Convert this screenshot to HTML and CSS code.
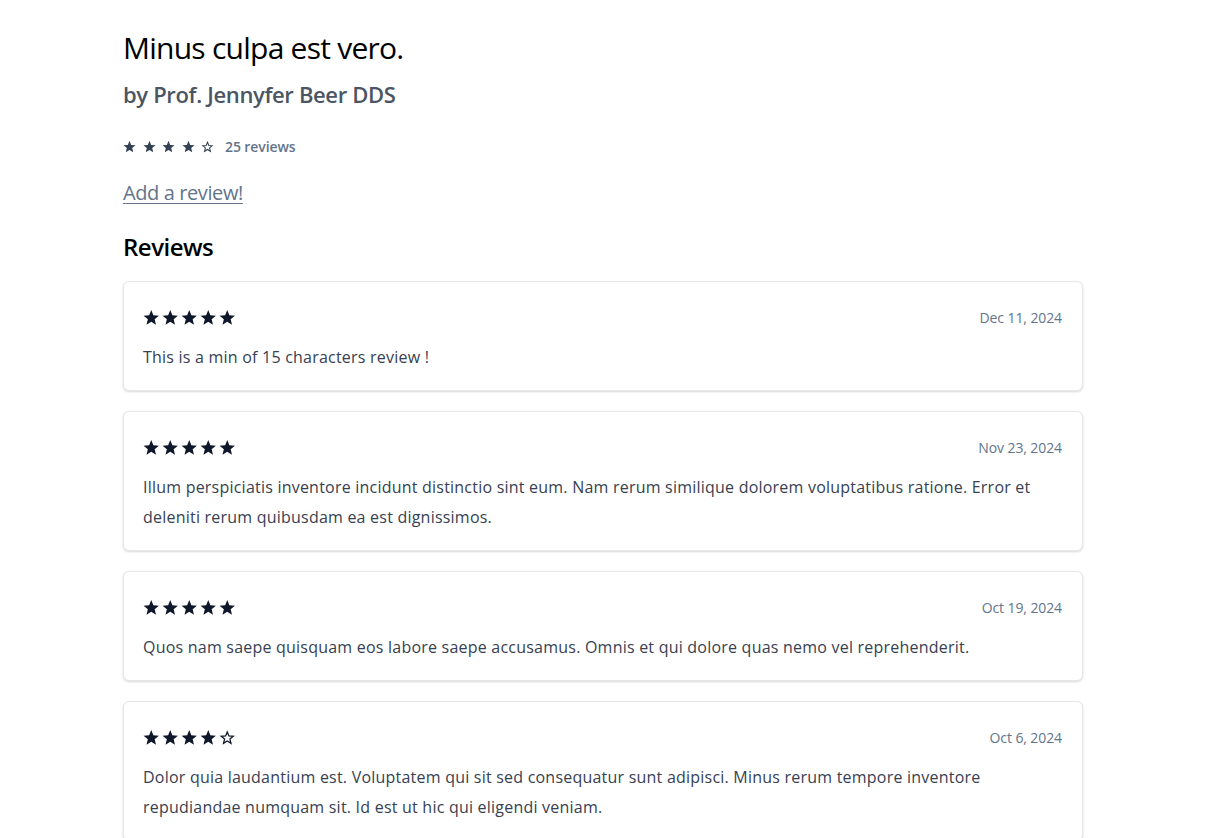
FILE: index.html
```html
<!DOCTYPE html>
<html lang="en">
<head>
<meta charset="utf-8">
<title>Minus culpa est vero.</title>
<link rel="stylesheet" href="styles.css">
</head>
<body>
<svg width="0" height="0" class="defs">
  <defs>
    <symbol id="star-full" viewBox="0 0 24 24"><path d="M12 1.6l3.06 7.5 8.09.6-6.2 5.22 1.94 7.88L12 18.5l-6.89 4.3 1.94-7.88L.85 9.7l8.09-.6z" fill="currentColor"/></symbol>
    <symbol id="star-empty" viewBox="0 0 24 24"><path d="M12 4.2l2.4 5.9 6.35.47-4.87 4.1 1.53 6.2L12 17.5l-5.41 3.37 1.53-6.2-4.87-4.1 6.35-.47z" fill="none" stroke="currentColor" stroke-width="1.9" stroke-linejoin="miter"/></symbol>
  </defs>
</svg>
<main class="page">
  <h1 class="title">Minus culpa est vero.</h1>
  <h2 class="author">by Prof. Jennyfer Beer DDS</h2>
  <div class="summary">
    <span class="stars stars-sm">
      <svg><use href="#star-full"/></svg><svg><use href="#star-full"/></svg><svg><use href="#star-full"/></svg><svg><use href="#star-full"/></svg><svg><use href="#star-empty"/></svg>
    </span>
    <span class="count">25 reviews</span>
  </div>
  <a class="add-link" href="#">Add a review!</a>
  <h3 class="reviews-heading">Reviews</h3>
  <section class="review-list">
    <article class="card">
      <div class="card-top">
        <span class="stars stars-md"><svg><use href="#star-full"/></svg><svg><use href="#star-full"/></svg><svg><use href="#star-full"/></svg><svg><use href="#star-full"/></svg><svg><use href="#star-full"/></svg></span>
        <span class="date">Dec 11, 2024</span>
      </div>
      <p class="body">This is a min of 15 characters review !</p>
    </article>
    <article class="card">
      <div class="card-top">
        <span class="stars stars-md"><svg><use href="#star-full"/></svg><svg><use href="#star-full"/></svg><svg><use href="#star-full"/></svg><svg><use href="#star-full"/></svg><svg><use href="#star-full"/></svg></span>
        <span class="date">Nov 23, 2024</span>
      </div>
      <p class="body">Illum perspiciatis inventore incidunt distinctio sint eum. Nam rerum similique dolorem voluptatibus ratione. Error et deleniti rerum quibusdam ea est dignissimos.</p>
    </article>
    <article class="card">
      <div class="card-top">
        <span class="stars stars-md"><svg><use href="#star-full"/></svg><svg><use href="#star-full"/></svg><svg><use href="#star-full"/></svg><svg><use href="#star-full"/></svg><svg><use href="#star-full"/></svg></span>
        <span class="date">Oct 19, 2024</span>
      </div>
      <p class="body">Quos nam saepe quisquam eos labore saepe accusamus. Omnis et qui dolore quas nemo vel reprehenderit.</p>
    </article>
    <article class="card">
      <div class="card-top">
        <span class="stars stars-md"><svg><use href="#star-full"/></svg><svg><use href="#star-full"/></svg><svg><use href="#star-full"/></svg><svg><use href="#star-full"/></svg><svg><use href="#star-empty"/></svg></span>
        <span class="date">Oct 6, 2024</span>
      </div>
      <p class="body">Dolor quia laudantium est. Voluptatem qui sit sed consequatur sunt adipisci. Minus rerum tempore inventore repudiandae numquam sit. Id est ut hic qui eligendi veniam.</p>
    </article>
  </section>
</main>
</body>
</html>
```

FILE: styles.css
```css
* { box-sizing: border-box; }
html, body { margin: 0; padding: 0; background: #ffffff; }
body {
  font-family: "Open Sans", "Noto Sans", "Liberation Sans", sans-serif;
  color: #111827;
}
.defs { position: absolute; width: 0; height: 0; overflow: hidden; }
.page {
  max-width: 1024px;
  margin: 0 auto;
  padding: 30px 32px 40px;
}
.title {
  margin: 0;
  font-size: 30px;
  line-height: 36px;
  font-weight: 400;
  color: #000;
  letter-spacing: -0.75px;
}
.author {
  margin: 14px 0 0;
  font-size: 22px;
  line-height: 28px;
  font-weight: 600;
  color: #4b5563;
  letter-spacing: -0.35px;
}
.summary {
  margin-top: 28px;
  display: flex;
  align-items: center;
  height: 20px;
}
.stars { display: inline-flex; align-items: center; }
.stars-sm { color: #334155; gap: 6.5px; }
.stars-sm svg { width: 13px; height: 13px; }
.count {
  margin-left: 11px;
  font-size: 14px;
  font-weight: 600;
  color: #64748b;
  letter-spacing: -0.1px;
}
.add-link {
  display: block;
  width: max-content;
  margin-top: 23px;
  font-size: 20px;
  line-height: 28px;
  color: #64748b;
  text-decoration: underline;
  text-underline-offset: 3px;
  text-decoration-thickness: 1px;
  letter-spacing: -0.4px;
}
.reviews-heading {
  margin: 24px 0 0;
  font-size: 24px;
  line-height: 32px;
  font-weight: 600;
  color: #000;
  letter-spacing: -0.5px;
}
.review-list {
  margin-top: 18px;
  display: flex;
  flex-direction: column;
  gap: 20px;
}
.card {
  border: 1px solid #e5e7eb;
  border-radius: 6px;
  box-shadow: 0 1px 3px rgba(0,0,0,0.10), 0 1px 2px rgba(0,0,0,0.06);
  padding: 21px 19px 18px;
  background: #fff;
}
.card-top {
  display: flex;
  justify-content: space-between;
  align-items: center;
  height: 29px;
}
.stars-md { color: #0f172a; gap: 2.5px; }
.stars-md svg { width: 16.5px; height: 16.5px; }
.date {
  font-size: 14px;
  color: #64748b;
  letter-spacing: -0.1px;
  padding-right: 1px;
}
.body {
  margin: 10px 0 0;
  font-size: 16px;
  line-height: 30px;
  color: #374151;
  letter-spacing: 0.22px;
}
```
